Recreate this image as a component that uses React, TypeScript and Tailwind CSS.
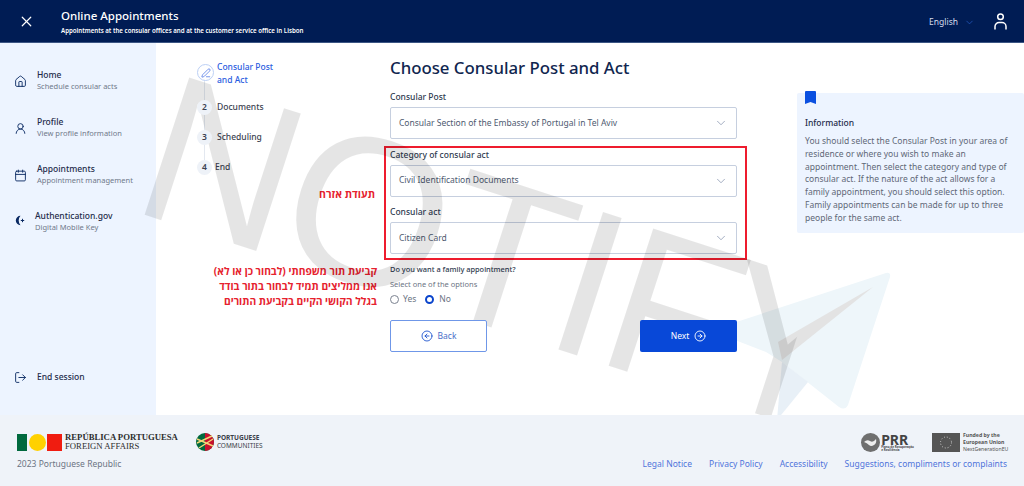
import { Calendar, ChevronDown, CircleArrowLeft, CircleArrowRight, House, LogOut, PenLine, UserRound, X } from "lucide-react";
import type { ReactNode } from "react";

const navItems = [
  { title: "Home", text: "Schedule consular acts", icon: <House size={13} strokeWidth={1.7} /> },
  { title: "Profile", text: "View profile information", icon: <UserRound size={13} strokeWidth={1.7} /> },
  { title: "Appointments", text: "Appointment management", icon: <Calendar size={13} strokeWidth={1.7} /> },
];

const links = ["Legal Notice", "Privacy Policy", "Accessibility", "Suggestions, compliments or complaints"];

function AuthIcon() {
  return (
    <svg width="11" height="11" viewBox="0 0 11 11" fill="none" stroke="#0b2a63" strokeWidth="1.5">
      <path d="M6.5 .8a4.7 4.7 0 1 0 0 9.4a7 7 0 0 1 0-9.4z" fill="#0b2a63" stroke="none" />
      <path d="M6.8 5.5h3.4M8.5 3.8v3.4" strokeWidth="1" />
    </svg>
  );
}

function Field({ label, value, className = "" }: { label: string; value: string; className?: string }) {
  return (
    <div className={className}>
      <label className="block text-[8.5px] leading-[11px] font-medium text-[#2e3a4f]">{label}</label>
      <div className="mt-[5px] flex h-[32px] items-center justify-between rounded-[2px] border border-[#c6cfdf] bg-white pl-[8px] pr-[8px] text-[8.5px] text-[#4e5a70]">
        <span>{value}</span>
        <ChevronDown size={14} strokeWidth={1.2} className="text-[#7d8ba8]" />
      </div>
    </div>
  );
}

function Step({ num, children, gap = "gap-[5px]" }: { num: string; children: ReactNode; gap?: string }) {
  return (
    <div className={`flex h-[30px] items-center text-[8.5px] font-medium text-[#3a4150] ${gap}`}>
      <span className="z-10 flex h-[15px] w-[15px] items-center justify-center rounded-full bg-[#eef2f8] text-[8.5px] font-semibold">
        {num}
      </span>
      {children}
    </div>
  );
}

export default function App() {
  return (
    <div className="flex h-[486px] w-[1024px] flex-col overflow-hidden bg-white font-['Noto_Sans',sans-serif]">
      <header className="z-20 flex h-[43px] shrink-0 items-center border-b border-[#3c5684] bg-[#001c54] text-white">
        <X size={17} strokeWidth={1.7} className="ml-[18px]" />
        <div className="ml-[26px]">
          <div className="text-[11.5px] leading-[16px] font-medium">Online Appointments</div>
          <div className="mt-[2px] text-[6.15px] leading-[9px] font-semibold">
            Appointments at the consular offices and at the customer service office in Lisbon
          </div>
        </div>
        <div className="ml-auto mt-[2px] flex items-center text-[8.5px] text-[#d5dcec]">
          English
          <ChevronDown size={11} strokeWidth={1.4} className="ml-[6px] text-[#2a62d0]" />
        </div>
        <svg width="13" height="17" viewBox="0 0 13 17" fill="none" stroke="white" strokeWidth="1.5" className="ml-[19px] mr-[17px]">
          <circle cx="6.5" cy="3.8" r="2.8" />
          <path d="M1 16.5v-3a4 4 0 0 1 4-4h3a4 4 0 0 1 4 4v3" />
        </svg>
      </header>

      <main className="relative flex h-[372px] shrink-0 overflow-hidden">
        <aside className="flex w-[156px] shrink-0 flex-col bg-[#edf4ff] pl-[14px] pt-[26px] text-[#1d2b4a]">
          {navItems.map((item) => (
            <div key={item.title} className="flex h-[47px] items-start gap-[10px]">
              <span className="mt-[6px] text-[#0b2a63]">{item.icon}</span>
              <div>
                <div className="text-[8.5px] leading-[12px] font-medium">{item.title}</div>
                <div className="text-[7.5px] leading-[11px] text-[#70798a]">{item.text}</div>
              </div>
            </div>
          ))}
          <div className="flex h-[47px] items-start gap-[10px]">
            <span className="mt-[5px]">
              <AuthIcon />
            </span>
            <div>
              <div className="text-[8.5px] leading-[12px] font-medium">Authentication.gov</div>
              <div className="text-[7.5px] leading-[11px] text-[#70798a]">Digital Mobile Key</div>
            </div>
          </div>
          <div className="mt-[114px] flex items-center gap-[10px] text-[8.5px] font-medium">
            <LogOut size={13} strokeWidth={1.7} className="text-[#0b2a63]" />
            End session
          </div>
        </aside>

        <nav className="relative w-[234px] shrink-0 pl-[41px] pt-[17px]">
          <div className="absolute left-[48px] top-[30px] h-[95px] w-px bg-[#e3e8f0]" />
          <div className="flex h-[32px] items-start gap-[4px] text-[8.5px] leading-[13px] font-medium text-[#2a5ce0]">
            <span className="z-10 mt-[4px] flex h-[17px] w-[17px] shrink-0 items-center justify-center rounded-full border border-[#bcd0f5] bg-white">
              <PenLine size={10} strokeWidth={1.5} />
            </span>
            <span className="ml-[-1px]">
              Consular Post
              <br />
              and Act
            </span>
          </div>
          <Step num="2">Documents</Step>
          <Step num="3">Scheduling</Step>
          <Step num="4" gap="gap-[3px]">End</Step>
        </nav>

        <section className="w-[347px] shrink-0 pt-[12px]">
          <h1 className="text-[16.8px] leading-[26px] font-medium text-[#10264f]">Choose Consular Post and Act</h1>
          <Field label="Consular Post" value="Consular Section of the Embassy of Portugal in Tel Aviv" className="mt-[10px]" />
          <Field label="Category of consular act" value="Civil Identification Documents" className="mt-[9.6px]" />
          <Field label="Consular act" value="Citizen Card" className="mt-[9.6px]" />
          <p className="mt-[10px] text-[7.4px] leading-[11px] font-medium text-[#2e3a4f]">Do you want a family appointment?</p>
          <p className="mt-[4px] text-[7.5px] leading-[11px] text-[#6c7483]">Select one of the options</p>
          <div className="mt-[3px] flex items-center text-[8.5px] text-[#6c7483]">
            <span className="h-[9px] w-[9px] rounded-full border border-[#7b8290] bg-white" />
            <span className="ml-[4px]">Yes</span>
            <span className="ml-[9px] h-[9px] w-[9px] rounded-full border-[2.5px] border-[#0b45cc] bg-white" />
            <span className="ml-[5px]">No</span>
          </div>
          <div className="mt-[14px] flex justify-between">
            <button className="z-10 flex h-[32px] w-[97px] items-center justify-center gap-[5px] rounded-[2px] border border-[#6f97e8] bg-white text-[8.5px] text-[#4a6fc9]">
              <CircleArrowLeft size={12} strokeWidth={1.8} className="text-[#1f56cf]" />
              Back
            </button>
            <button className="z-10 flex h-[32px] w-[97px] items-center justify-center gap-[5px] rounded-[2px] bg-[#0848d8] text-[8.5px] text-white">
              Next
              <CircleArrowRight size={12} strokeWidth={1.8} />
            </button>
          </div>
        </section>

        <aside className="ml-[60px] mt-[50px] h-[140px] w-[227px] rounded-[2px] bg-[#edf4ff] px-[8px]">
          <svg width="11" height="13" viewBox="0 0 11 13" className="-mt-[2px]">
            <path d="M1 0h9a1 1 0 0 1 1 1v12l-5.5-2L0 13V1a1 1 0 0 1 1-1z" fill="#0b50e0" />
          </svg>
          <h2 className="mt-[13px] text-[8.5px] leading-[12px] font-medium text-[#1d2b4a]">Information</h2>
          <p className="mt-[6px] text-[8.5px] leading-[12.8px] text-[#5f6877]">
            You should select the Consular Post in your area of residence or where you wish to make an appointment. Then select the
            category and type of consular act. If the nature of the act allows for a family appointment, you should select this option.
            Family appointments can be made for up to three people for the same act.
          </p>
        </aside>

        {/* red notes drawn over the page */}
        <div className="absolute left-[384px] top-[103px] h-[114px] w-[363px] border-2 border-[#ee1c2e]" />
        <div dir="rtl" className="absolute left-[299px] top-[144px] w-[76px] font-['Open_Sans','Liberation_Sans',sans-serif] text-[10.5px] leading-[15px] font-bold text-[#e6222e]">
          תעודת אזרח
        </div>
        <div dir="rtl" className="absolute left-[157px] top-[220.5px] w-[220px] font-['Open_Sans','Liberation_Sans',sans-serif] text-[10.25px] leading-[15px] font-bold text-[#e6222e]">
          <div>קביעת תור משפחתי (לבחור כן או לא)</div>
          <div>אנו ממליצים תמיד לבחור בתור בודד</div>
          <div>בגלל הקושי הקיים בקביעת התורים</div>
        </div>

        {/* watermark */}
        <svg width="340" height="170" viewBox="0 0 340 170" className="pointer-events-none absolute left-[684px] top-[222px]">
          <g transform="translate(-684 -265)">
            <path d="M718 328L886 273q5-1 4 4L848 405q-3 6-9 2L782 362L766 352L722 335q-6-4-4-7z" fill="#eef6fa" />
            <path d="M782 362L808 382L777 420z" fill="#e8f0f7" />
            <path d="M873 287L778 342L782 360z" fill="#e3e3e3" />
          </g>
        </svg>
        <span className="pointer-events-none absolute left-[118px] top-[-12.5px] origin-bottom-left rotate-[18deg] font-['Liberation_Sans',sans-serif] text-[210px] leading-[210px] tracking-[-3.4px] whitespace-nowrap text-black/10">
          NOTIF
          <span className="ml-[-14px] inline-block [clip-path:polygon(0_0,56%_0,56%_100%,0_100%)]">Y</span>
        </span>
      </main>

      <footer className="z-20 flex-1 bg-[#eff3f9] px-[17px] pt-[17px]">
        <div className="flex h-[20px] items-center">
          <span className="h-[17px] w-[10px] bg-[#00693e]" />
          <span className="ml-[2px] h-[17px] w-[17px] rounded-full bg-[#ffd100]" />
          <span className="ml-[1px] h-[17px] w-[15px] bg-[#f01c10]" />
          <div className="ml-[3px] font-['Liberation_Serif',serif] text-[8.7px] leading-[9px] text-[#2d2d2d]">
            <div className="font-bold">REPÚBLICA PORTUGUESA</div>
            <div>FOREIGN AFFAIRS</div>
          </div>
          <svg width="18" height="18" viewBox="0 0 18 18" className="ml-[18px]">
            <circle cx="9" cy="9" r="9" fill="#00693e" />
            <path d="M9 0a9 9 0 0 1 0 18z" fill="#c8102e" />
            <path d="M1 6l16 7M1 10l15-7M3 15L17 6" stroke="#f2d678" strokeWidth="1.4" />
          </svg>
          <div className="ml-[3px] text-[6.5px] leading-[8px] text-[#3a3f49]">
            <div className="font-bold">PORTUGUESE</div>
            <div>COMMUNITIES</div>
          </div>
          <div className="ml-auto flex items-center">
            <svg width="19" height="19" viewBox="0 0 19 19">
              <circle cx="9.5" cy="9.5" r="9.5" fill="#6f6f6f" />
              <path d="M3 9q3-3 6-1t6-2q1 4-2 6t-5 0t-5-3z" fill="#eee" />
            </svg>
            <div className="ml-[1px] text-[#444]">
              <div className="text-[14px] leading-[13px] font-bold">PRR</div>
              <div className="text-[3px] leading-[3px] font-bold">Plano de Recuperação</div>
              <div className="text-[3px] leading-[3px] font-bold">e Resiliência</div>
            </div>
            <svg width="28" height="19" viewBox="0 0 28 19" className="ml-[18px]">
              <rect width="28" height="19" fill="#555" />
              <circle cx="14" cy="9.5" r="5.5" fill="none" stroke="#ccc" strokeWidth="1" strokeDasharray="1 1.9" />
            </svg>
            <div className="ml-[3px] w-[44px] text-[5.2px] leading-[7px] font-bold text-[#555]">
              <div>Funded by the</div>
              <div>European Union</div>
              <div className="font-normal">NextGenerationEU</div>
            </div>
          </div>
        </div>
        <div className="mt-[5px] flex items-center justify-between text-[8.5px] leading-[14px]">
          <span className="text-[#6c7483]">2023 Portuguese Republic</span>
          <div className="flex gap-[17px] text-[#4f74db]">
            {links.map((link) => (
              <a key={link}>{link}</a>
            ))}
          </div>
        </div>
      </footer>
    </div>
  );
}
